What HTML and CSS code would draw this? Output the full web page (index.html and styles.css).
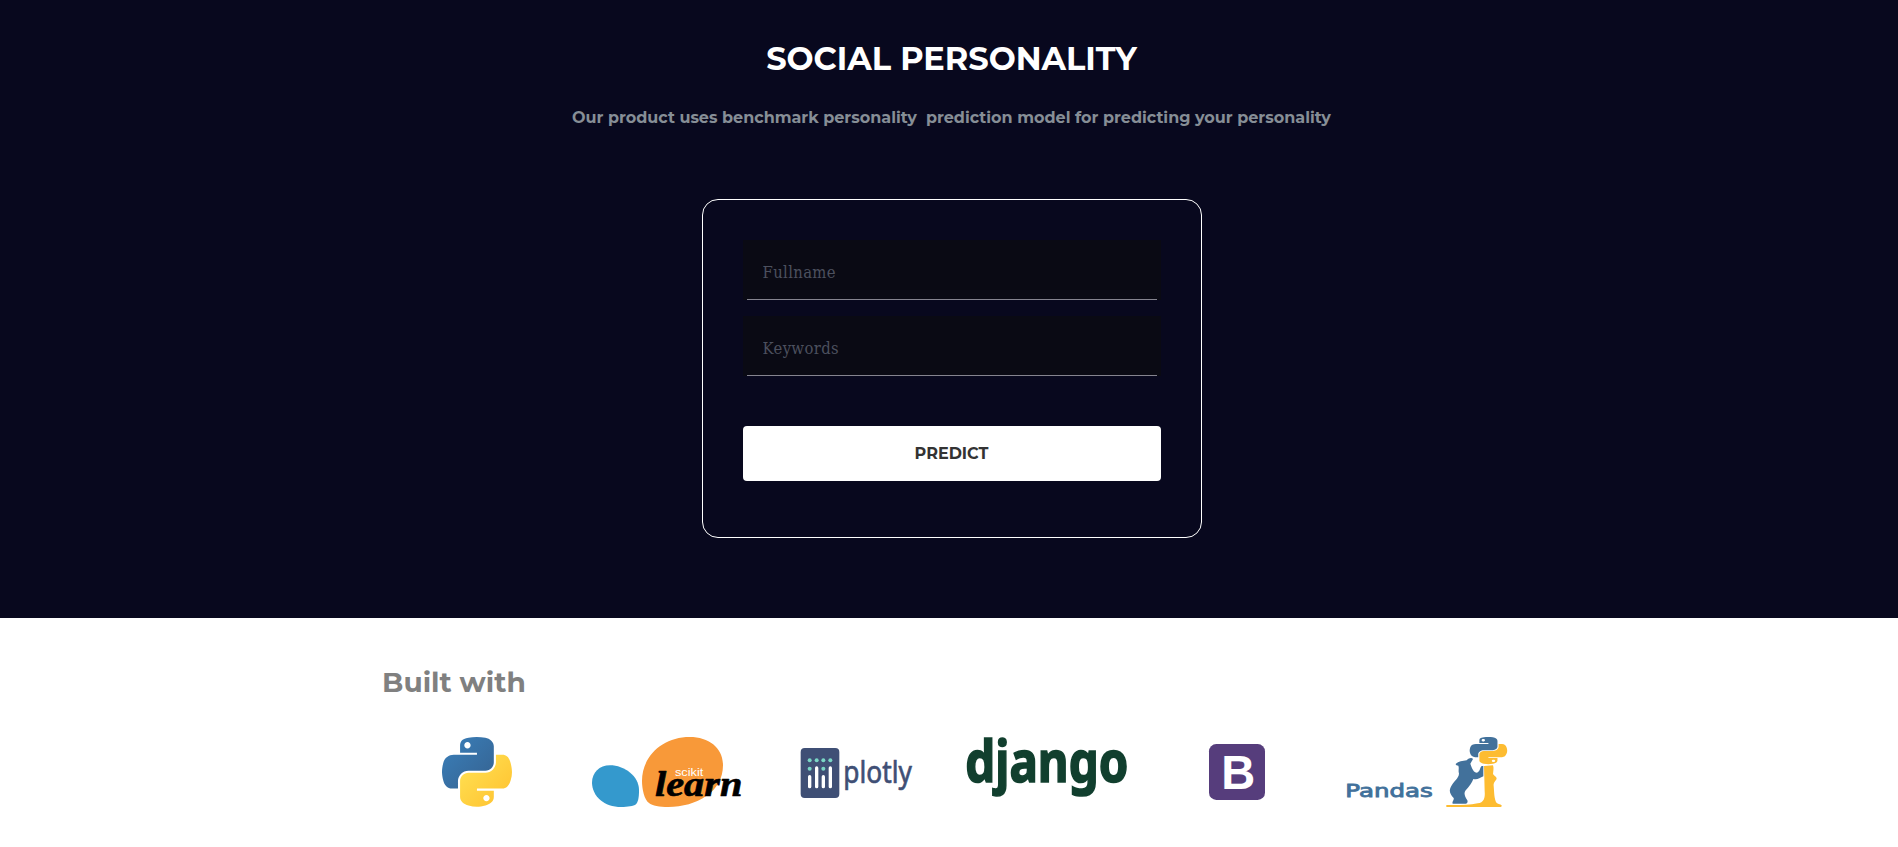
FILE: index.html
```html
<!DOCTYPE html>
<html lang="en">
<head>
<meta charset="utf-8">
<title>Social Personality</title>
<link rel="stylesheet" href="styles.css">
</head>
<body>
<svg class="defs" width="0" height="0" aria-hidden="true">
  <defs>
    <linearGradient id="blue" x1="0" y1="0" x2="1" y2="1"><stop offset="0" stop-color="#3a80bb"/><stop offset="1" stop-color="#35618f"/></linearGradient>
    <linearGradient id="yellow" x1="0" y1="0" x2="1" y2="1"><stop offset="0.1" stop-color="#ffe052"/><stop offset="0.9" stop-color="#ffc331"/></linearGradient>
    <path id="snake-top" d="M63.391 1.988c-4.222.02-8.252.379-11.8 1.007-10.45 1.846-12.346 5.71-12.346 12.837v9.411h24.693v3.137H29.977c-7.176 0-13.46 4.313-15.426 12.521-2.268 9.405-2.368 15.275 0 25.096 1.755 7.311 5.947 12.519 13.124 12.519h8.491V67.234c0-8.151 7.051-15.34 15.426-15.34h24.665c6.866 0 12.346-5.654 12.346-12.548V15.833c0-6.693-5.646-11.72-12.346-12.837-4.244-.706-8.645-1.027-12.866-1.008zM50.037 9.557c2.55 0 4.634 2.117 4.634 4.721 0 2.593-2.083 4.69-4.634 4.69-2.56 0-4.633-2.097-4.633-4.69-.001-2.604 2.073-4.721 4.633-4.721z"/>
    <path id="snake-bottom" d="M91.682 28.38v10.966c0 8.5-7.208 15.655-15.426 15.655H51.591c-6.756 0-12.346 5.783-12.346 12.549v23.515c0 6.691 5.818 10.628 12.346 12.547 7.816 2.297 15.312 2.713 24.665 0 6.216-1.801 12.346-5.423 12.346-12.547v-9.412H63.938v-3.138h37.012c7.176 0 9.852-5.005 12.348-12.519 2.578-7.735 2.467-15.174 0-25.096-1.774-7.145-5.161-12.521-12.348-12.521h-9.268zM77.809 87.927c2.561 0 4.634 2.097 4.634 4.692 0 2.602-2.074 4.719-4.634 4.719-2.55 0-4.633-2.117-4.633-4.719 0-2.595 2.083-4.692 4.633-4.692z"/>
  </defs>
</svg>
<header class="hero">
  <h1 class="title">SOCIAL PERSONALITY</h1>
  <p class="subtitle">Our product uses benchmark personality&nbsp; prediction model for predicting your personality</p>
  <form class="card">
    <input class="field" type="text" placeholder="Fullname">
    <input class="field" type="text" placeholder="Keywords">
    <button class="predict" type="button">PREDICT</button>
  </form>
</header>
<section class="built">
  <h2 class="built-title">Built with</h2>
  <div class="logos">
    <div class="logo">
      <svg width="70" height="70" viewBox="12.8 2 102.4 103.8" preserveAspectRatio="none">
        <use href="#snake-top" fill="url(#blue)"/><use href="#snake-bottom" fill="url(#yellow)"/>
      </svg>
    </div>
    <div class="logo">
      <svg width="150" height="70" viewBox="36 51 450 210">
        <path fill="#3499cd" d="M90 136C58 136 36 158 36 188C37 229 72 261 124 261C143 261 160 259 168 253C176 244 177 227 177 211C177 168 133 136 90 136Z"/>
        <path fill="#f89939" d="M329 51C249 51 186 107 186 183C186 207 193 239 207 249C217 257 238 261 265 261C350 261 429 216 429 136C429 84 388 51 329 51Z"/>
        <text class="learn" x="225" y="229" textLength="262" lengthAdjust="spacingAndGlyphs">learn</text>
        <text class="scikit" x="285" y="167" textLength="85" lengthAdjust="spacingAndGlyphs">scikit</text>
      </svg>
    </div>
    <div class="logo logo-plotly">
      <svg width="112" height="50" viewBox="62 84 336 150">
        <rect x="61" y="84" width="116" height="150" rx="12" fill="#3f4f75"/>
        <g stroke="#fff" stroke-width="10" stroke-linecap="round"><path d="M88 170V200M109 144V200M129 170V200M150 144V200"/></g>
        <g fill="#7ad6c5"><circle cx="88" cy="121" r="6"/><circle cx="109" cy="121" r="6"/><circle cx="129" cy="121" r="6"/><circle cx="150" cy="121" r="6"/><circle cx="88" cy="146" r="6"/><circle cx="129" cy="146" r="6"/></g>
        <text class="plotly" x="189" y="190" textLength="206" lengthAdjust="spacingAndGlyphs">plotly</text>
      </svg>
    </div>
    <div class="logo">
      <svg width="160" height="60" viewBox="51 51 480 180">
        <text class="django" x="46" y="185" textLength="489" lengthAdjust="spacingAndGlyphs">django</text>
      </svg>
    </div>
    <div class="logo logo-bootstrap">
      <svg width="56" height="56" viewBox="57 72 168 168">
        <rect x="57" y="72" width="168" height="168" rx="22" fill="#563d7c"/>
        <text class="bootstrap" x="94" y="207" textLength="102" lengthAdjust="spacingAndGlyphs">B</text>
      </svg>
    </div>
    <div class="logo">
      <svg width="161" height="70" viewBox="50 51 483 210">
        <text class="pandas" x="45" y="231" textLength="262" lengthAdjust="spacingAndGlyphs">Pandas</text>
        <path fill="#42719b" d="M376 132C384 124 397 123 409 121C416 113 425 112 428 117L420 131C425 145 430 158 440 158C450 154 448 143 454 138L459 138V169C448 173 441 181 429 177C425 188 417 199 407 210C399 219 403 229 411 241C413 246 411 251 406 251H367C364 244 372 240 370 234C360 224 355 213 361 202C369 184 386 176 386 160C383 152 387 145 384 137C380 137 376 135 376 132Z"/>
        <path fill="#fdbc31" d="M461 138L488 136C491 143 489 153 488 162C491 168 499 170 499 176C495 184 489 186 490 198C492 218 491 237 499 249C504 253 512 252 515 258L511 261H348V255C380 255 413 256 442 250C460 249 465 234 463 214Z"/>
        <g transform="translate(418 51) scale(1.1 .79) translate(-12.8 -2)"><use href="#snake-top" fill="#42719b"/><use href="#snake-bottom" fill="#fdbc31"/></g>
      </svg>
    </div>
  </div>
</section>
</body>
</html>
```
FILE: styles.css
```css
* { box-sizing: border-box; }
body { margin: 0; background: #fff; font-family: Montserrat, Inter, sans-serif; overflow: hidden; }
.defs { display: block; height: 0; }
.hero {
  height: 618px;
  padding-top: 39px;
  display: flex;
  flex-direction: column;
  align-items: center;
  padding-left: 5px;
  background: #08081e;
}
.title { margin: 0; font-size: 32px; line-height: 40px; font-weight: 700; color: #fff; white-space: nowrap; }
.subtitle { margin: 27px 0 0; font-size: 16px; line-height: 24px; font-weight: 700; color: #868e96; white-space: nowrap; }
.card {
  width: 500px;
  height: 339px;
  margin: 69px 0 0;
  padding: 40px;
  display: flex;
  flex-direction: column;
  border: 1px solid #fff;
  border-radius: 16px;
}
.field {
  height: 60px;
  margin-bottom: 16px;
  padding: 5px 20px 0;
  border: 0;
  background: linear-gradient(#85848f, #85848f) 4px 100% / calc(100% - 8px) 1px no-repeat, #0a0a14;
  color: #fff;
  font: 16.5px "Roboto Slab", "DejaVu Serif Condensed", "DejaVu Serif", serif;
  letter-spacing: .35px;
}
.field::placeholder { color: #4c505e; opacity: 1; }
.predict {
  height: 55px;
  margin-top: 34px;
  border: 0;
  border-radius: 4px;
  background: #fff;
  color: #333;
  font: 700 16px Montserrat, Inter, sans-serif;
}
.built { width: 1140px; margin: 0 0 0 382px; padding-top: 47px; }
.built-title { margin: 0; font-size: 28px; line-height: 34px; font-weight: 700; color: #808080; }
.logos { display: grid; grid-template-columns: repeat(6, 190px); margin-top: 38px; }
.logo { display: flex; justify-content: center; align-items: flex-start; }
.logo svg { display: block; overflow: visible; }
.logo-plotly { padding-top: 11px; }
.logo-bootstrap { padding-top: 7px; }
.scikit { font: 33px "Liberation Sans", sans-serif; fill: #fff; }
.learn { font: italic 700 108px "Liberation Serif", serif; fill: #000; stroke: #000; stroke-width: 2px; stroke-linejoin: round; }
.plotly { font: 400 94px "Noto Sans", sans-serif; fill: #3f4f75; stroke: #3f4f75; stroke-width: 2px; stroke-linejoin: round; }
.django { font: 700 172px "Noto Sans", sans-serif; fill: #113f2e; stroke: #113f2e; stroke-width: 5px; }
.bootstrap { font: 700 146px "Liberation Sans", sans-serif; fill: #fff; }
.pandas { font: 400 52px "DejaVu Sans", sans-serif; fill: #42719b; stroke: #42719b; stroke-width: 2.5px; }
```
